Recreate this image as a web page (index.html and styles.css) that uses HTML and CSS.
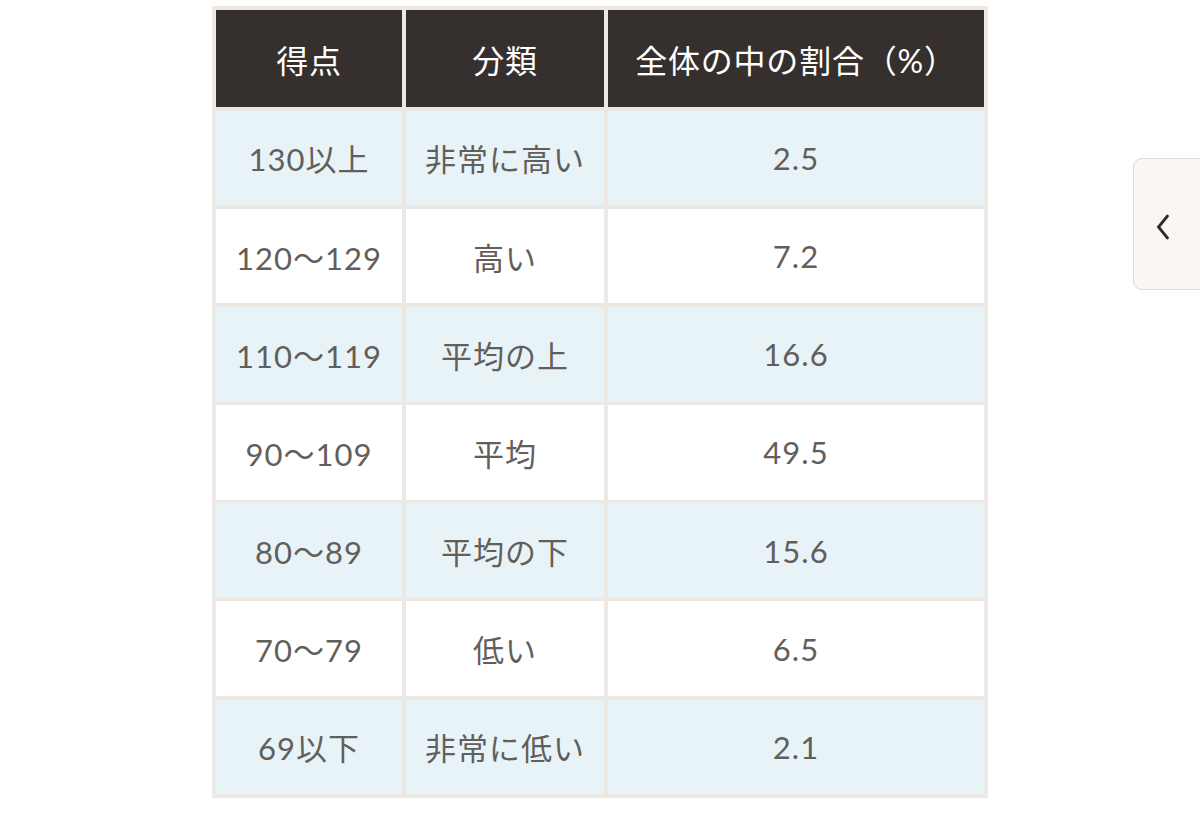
FILE: index.html
```html
<!DOCTYPE html>
<html lang="ja">
<head>
<meta charset="utf-8">
<link rel="stylesheet" href="styles.css">
</head>
<body>
<div class="page">
  <div class="table">
    <div class="cell head">得点</div>
    <div class="cell head">分類</div>
    <div class="cell head">全体の中の割合（%）</div>

    <div class="cell blue">130以上</div>
    <div class="cell blue">非常に高い</div>
    <div class="cell blue">2.5</div>

    <div class="cell">120〜129</div>
    <div class="cell">高い</div>
    <div class="cell">7.2</div>

    <div class="cell blue">110〜119</div>
    <div class="cell blue">平均の上</div>
    <div class="cell blue">16.6</div>

    <div class="cell">90〜109</div>
    <div class="cell">平均</div>
    <div class="cell">49.5</div>

    <div class="cell blue">80〜89</div>
    <div class="cell blue">平均の下</div>
    <div class="cell blue">15.6</div>

    <div class="cell">70〜79</div>
    <div class="cell">低い</div>
    <div class="cell">6.5</div>

    <div class="cell blue">69以下</div>
    <div class="cell blue">非常に低い</div>
    <div class="cell blue">2.1</div>
  </div>
</div>
<div class="side-tab">
  <svg class="chevron" width="20" height="28" viewBox="0 0 20 28"><path d="M14.5 3 L5.5 14 L14.5 25" fill="none" stroke="#2d2a28" stroke-width="2.8" stroke-linecap="round" stroke-linejoin="miter"/></svg>
</div>
</body>
</html>
```

FILE: styles.css
```css
html, body {
  margin: 0;
  padding: 0;
  background: #ffffff;
}
body {
  font-family: "Lato", "Noto Sans CJK JP", sans-serif;
  width: 1200px;
  height: 817px;
  overflow: hidden;
  position: relative;
}
.page {
  padding: 6px 0 0 212px;
}
.table {
  display: grid;
  grid-template-columns: 186px 198px 376px;
  grid-template-rows: 97px repeat(7, 94.7px);
  column-gap: 4px;
  row-gap: 3.5px;
  padding: 4px;
  width: 776px;
  box-sizing: border-box;
  background: #ece8e4;
}
.cell {
  display: flex;
  align-items: center;
  justify-content: center;
  background: #ffffff;
  color: #625e5b;
  font-size: 31px;
  letter-spacing: 1px;
}
.cell.blue {
  background: #e8f3f8;
}
.cell.head {
  background: #35302d;
  color: #ffffff;
  font-size: 32px;
  letter-spacing: 0.8px;
}
.side-tab {
  position: absolute;
  left: 1133px;
  top: 158px;
  width: 80px;
  height: 132px;
  box-sizing: border-box;
  background: #faf6f1;
  border: 1.5px solid #dedad6;
  border-radius: 9px;
  display: flex;
  align-items: center;
  padding-left: 18.5px;
}
.chevron {
  margin-top: 5px;
}
```
